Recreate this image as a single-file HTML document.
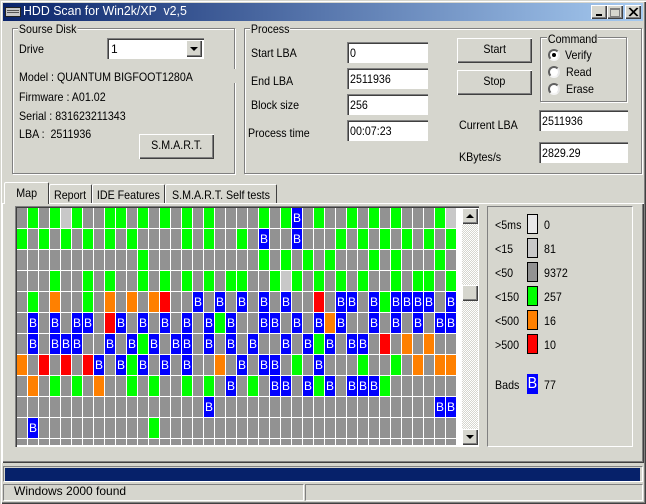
<!DOCTYPE html>
<html><head><meta charset="utf-8">
<style>
html,body{margin:0;padding:0;background:#d6d6ce}
#w{position:relative;width:646px;height:504px;overflow:hidden;background:#d6d6ce;font:12px/14px "Liberation Sans","NanumGothic",sans-serif;color:#000}
#w div,#w span.t{position:absolute;box-sizing:border-box}
.t{white-space:pre;position:absolute;transform:scaleX(.89);transform-origin:0 0}
.s{display:inline-block;white-space:pre;transform:scaleX(.89);transform-origin:0 0}
.c{display:inline-block;white-space:pre;transform:scaleX(.89);transform-origin:50% 50%}
.grp{border:1px solid #808080;box-shadow:1px 1px 0 #fff,inset 1px 1px 0 #fff}
.lbl{background:#d6d6ce;padding:0 1px}
.in{background:#fff;box-shadow:inset 1px 1px 0 #808080,inset 2px 2px 0 #404040,inset -1px -1px 0 #fff;padding:4px 0 0 3px;height:21px;font-size:12px;line-height:14px}
.btn{background:#d6d6ce;box-shadow:inset 1px 1px 0 #fff,inset -1px -1px 0 #404040,inset -2px -2px 0 #808080;text-align:center;line-height:22px}
.rad{width:12px;height:12px;border-radius:50%;background:#fff;border:2px solid;border-color:#606060 #e8e8e8 #f4f4f4 #606060;left:548px}
.tab{background:#d6d6ce;border:1px solid #fff;border-right:1px solid #404040;border-bottom:0;border-radius:2px 2px 0 0;padding-top:3px;text-align:center;white-space:nowrap}
#g{left:17px;top:208px;width:439px;height:237px;overflow:hidden;display:grid;grid-template-columns:repeat(40,11px);grid-template-rows:repeat(12,21px);background-color:#929292;background-image:repeating-linear-gradient(90deg,transparent 0 10px,#fff 10px 11px),repeating-linear-gradient(180deg,transparent 0 20px,#fff 20px 21px)}
#g i,#g b{display:block;width:10px;height:20px;font:normal 12px/20px "Liberation Sans Narrow","Liberation Sans",sans-serif;color:#fff;text-align:center}
.g{background:#0f0}.o{background:#ff8000}.r{background:#f00}.l{background:#c8c8c8}#g b{background:#00f}
.sw{left:527px;width:11px;height:20px;border:1px solid #000}
</style></head><body>
<div id="w">
<!-- window frame -->
<div style="left:0;top:0;width:646px;height:504px;box-shadow:inset 1px 1px 0 #d6d6ce,inset 2px 2px 0 #fff,inset -1px -1px 0 #404040,inset -2px -2px 0 #808080"></div>
<!-- title -->
<div style="left:3px;top:3px;width:640px;height:18px;background:linear-gradient(90deg,#0a246a,#a6caf0)"></div>
<div style="left:5px;top:7px;width:16px;height:10px;background:#c8c8c8;border:1px solid #222"></div>
<div style="left:7px;top:10px;width:12px;height:1px;background:#555"></div>
<div style="left:7px;top:12px;width:12px;height:1px;background:#555"></div>
<span class="t" style="left:23px;top:4px;color:#fff;font-size:13px;line-height:14px;transform:scaleX(.95)">HDD Scan for Win2k/XP  v2,5</span>
<div class="btn" style="left:591px;top:5px;width:16px;height:14px"></div>
<div style="left:596px;top:14px;width:6px;height:2px;background:#000"></div>
<div class="btn" style="left:607px;top:5px;width:16px;height:14px"></div>
<div style="left:610px;top:8px;width:10px;height:9px;border:1px solid #808080;border-top-width:2px"></div>
<div class="btn" style="left:625px;top:5px;width:16px;height:14px"></div>
<svg style="position:absolute;left:625px;top:5px" width="16" height="14"><path d="M4 3L12 11M5 3L13 11M12 3L4 11M13 3L5 11" stroke="#000" stroke-width="1"/></svg>

<!-- Sourse Disk -->
<div class="grp" style="left:12px;top:28px;width:223px;height:146px"></div>
<div style="left:233px;top:69px;width:5px;height:14px;background:#d6d6ce"></div>
<span class="t lbl" style="left:18px;top:22px">Sourse Disk</span>
<span class="t" style="left:19px;top:42px">Drive</span>
<div class="in" style="left:107px;top:38px;width:97px;height:21px;padding-left:4px">1</div>
<div class="btn" style="left:186px;top:40px;width:16px;height:17px"></div>
<svg style="position:absolute;left:186px;top:40px" width="16" height="17"><path d="M4 7H12L8 11Z" fill="#000"/></svg>
<span class="t" style="left:19px;top:70px">Model : QUANTUM BIGFOOT1280A</span>
<span class="t" style="left:19px;top:90px">Firmware : A01.02</span>
<span class="t" style="left:19px;top:109px">Serial : 831623211343</span>
<span class="t" style="left:19px;top:127px">LBA :  2511936</span>
<div class="btn" style="left:139px;top:134px;width:75px;height:25px"><span class="c">S.M.A.R.T.</span></div>

<!-- Process -->
<div class="grp" style="left:244px;top:28px;width:398px;height:146px"></div>
<span class="t lbl" style="left:250px;top:22px">Process</span>
<span class="t" style="left:251px;top:46px">Start LBA</span>
<span class="t" style="left:251px;top:74px">End LBA</span>
<span class="t" style="left:251px;top:98px">Block size</span>
<span class="t" style="left:248px;top:126px">Process time</span>
<div class="in" style="left:347px;top:42px;width:81px"><span class="s">0</span></div>
<div class="in" style="left:347px;top:68px;width:81px"><span class="s">2511936</span></div>
<div class="in" style="left:347px;top:94px;width:81px"><span class="s">256</span></div>
<div class="in" style="left:347px;top:120px;width:81px"><span class="s">00:07:23</span></div>
<div class="btn" style="left:457px;top:38px;width:75px;height:25px"><span class="c">Start</span></div>
<div class="btn" style="left:457px;top:70px;width:75px;height:25px"><span class="c">Stop</span></div>
<div class="grp" style="left:540px;top:37px;width:87px;height:65px"></div>
<span class="t lbl" style="left:547px;top:32px">Command</span>
<div class="rad" style="top:49px"></div>
<div style="left:552px;top:53px;width:4px;height:4px;border-radius:50%;background:#000"></div>
<div class="rad" style="top:66px"></div>
<div class="rad" style="top:83px"></div>
<span class="t" style="left:565px;top:48px">Verify</span>
<span class="t" style="left:566px;top:65px">Read</span>
<span class="t" style="left:566px;top:82px">Erase</span>
<span class="t" style="left:459px;top:118px">Current LBA</span>
<span class="t" style="left:459px;top:150px">KBytes/s</span>
<div class="in" style="left:539px;top:110px;width:89px"><span class="s">2511936</span></div>
<div class="in" style="left:539px;top:142px;width:89px"><span class="s">2829.29</span></div>

<!-- tab page -->
<div style="left:2px;top:203px;width:642px;height:260px;box-shadow:inset 1px 1px 0 #fff,inset -1px -1px 0 #404040,inset -2px -2px 0 #808080"></div>
<div class="tab" style="left:49px;top:184px;width:43px;height:19px"><span class="c">Report</span></div>
<div class="tab" style="left:92px;top:184px;width:73px;height:19px"><span class="c">IDE Features</span></div>
<div class="tab" style="left:165px;top:184px;width:112px;height:19px"><span class="c">S.M.A.R.T. Self tests</span></div>
<div class="tab" style="left:4px;top:182px;width:45px;height:22px"><span class="c">Map</span></div>

<!-- map -->
<div style="left:15px;top:206px;width:464px;height:241px;background:#fff;box-shadow:inset 1px 1px 0 #808080,inset 2px 2px 0 #404040"></div>
<div id="g">
<i class="g" style="grid-area:1/2"></i><i class="g" style="grid-area:1/4"></i><i class="l" style="grid-area:1/5"></i><i class="g" style="grid-area:1/6"></i><i class="g" style="grid-area:1/9"></i><i class="g" style="grid-area:1/10"></i><i class="g" style="grid-area:1/12"></i><i class="g" style="grid-area:1/14"></i><i class="g" style="grid-area:1/16"></i><i class="g" style="grid-area:1/18"></i><i class="g" style="grid-area:1/23"></i><i class="g" style="grid-area:1/25"></i><b style="grid-area:1/26">B</b><i class="g" style="grid-area:1/28"></i><i class="g" style="grid-area:1/31"></i><i class="g" style="grid-area:1/33"></i><i class="g" style="grid-area:1/35"></i><i class="g" style="grid-area:1/39"></i><i class="l" style="grid-area:1/40"></i>
<i class="g" style="grid-area:2/1"></i><i class="g" style="grid-area:2/3"></i><i class="g" style="grid-area:2/5"></i><i class="g" style="grid-area:2/7"></i><i class="g" style="grid-area:2/9"></i><i class="g" style="grid-area:2/11"></i><i class="g" style="grid-area:2/16"></i><i class="g" style="grid-area:2/18"></i><i class="g" style="grid-area:2/21"></i><b style="grid-area:2/23">B</b><b style="grid-area:2/26">B</b><i class="g" style="grid-area:2/30"></i><i class="g" style="grid-area:2/32"></i><i class="g" style="grid-area:2/34"></i><i class="g" style="grid-area:2/36"></i><i class="g" style="grid-area:2/38"></i><i class="g" style="grid-area:2/40"></i>
<i class="g" style="grid-area:3/12"></i><i class="g" style="grid-area:3/23"></i><i class="g" style="grid-area:3/25"></i><i class="g" style="grid-area:3/27"></i><i class="g" style="grid-area:3/29"></i><i class="g" style="grid-area:3/33"></i><i class="g" style="grid-area:3/35"></i><i class="g" style="grid-area:3/39"></i>
<i class="g" style="grid-area:4/4"></i><i class="g" style="grid-area:4/7"></i><i class="g" style="grid-area:4/9"></i><i class="g" style="grid-area:4/12"></i><i class="g" style="grid-area:4/14"></i><i class="g" style="grid-area:4/16"></i><i class="g" style="grid-area:4/18"></i><i class="g" style="grid-area:4/20"></i><i class="g" style="grid-area:4/21"></i><i class="g" style="grid-area:4/24"></i><i class="l" style="grid-area:4/25"></i><i class="g" style="grid-area:4/26"></i><i class="g" style="grid-area:4/28"></i><i class="g" style="grid-area:4/30"></i><i class="g" style="grid-area:4/32"></i><i class="g" style="grid-area:4/35"></i><i class="g" style="grid-area:4/37"></i><i class="g" style="grid-area:4/38"></i><i class="g" style="grid-area:4/40"></i>
<i class="g" style="grid-area:5/2"></i><i class="o" style="grid-area:5/4"></i><i class="g" style="grid-area:5/7"></i><i class="o" style="grid-area:5/9"></i><i class="o" style="grid-area:5/11"></i><i class="o" style="grid-area:5/13"></i><i class="r" style="grid-area:5/14"></i><b style="grid-area:5/17">B</b><b style="grid-area:5/19">B</b><b style="grid-area:5/21">B</b><b style="grid-area:5/23">B</b><b style="grid-area:5/25">B</b><i class="r" style="grid-area:5/28"></i><b style="grid-area:5/30">B</b><b style="grid-area:5/31">B</b><b style="grid-area:5/33">B</b><i class="g" style="grid-area:5/34"></i><b style="grid-area:5/35">B</b><b style="grid-area:5/36">B</b><b style="grid-area:5/37">B</b><b style="grid-area:5/38">B</b><b style="grid-area:5/40">B</b>
<b style="grid-area:6/2">B</b><b style="grid-area:6/4">B</b><b style="grid-area:6/6">B</b><b style="grid-area:6/7">B</b><i class="r" style="grid-area:6/9"></i><b style="grid-area:6/10">B</b><b style="grid-area:6/12">B</b><b style="grid-area:6/14">B</b><b style="grid-area:6/16">B</b><b style="grid-area:6/18">B</b><i class="g" style="grid-area:6/19"></i><b style="grid-area:6/20">B</b><b style="grid-area:6/23">B</b><b style="grid-area:6/24">B</b><b style="grid-area:6/26">B</b><b style="grid-area:6/28">B</b><i class="o" style="grid-area:6/29"></i><b style="grid-area:6/30">B</b><b style="grid-area:6/33">B</b><b style="grid-area:6/35">B</b><b style="grid-area:6/37">B</b><b style="grid-area:6/39">B</b><b style="grid-area:6/40">B</b>
<b style="grid-area:7/2">B</b><b style="grid-area:7/4">B</b><b style="grid-area:7/5">B</b><b style="grid-area:7/6">B</b><b style="grid-area:7/9">B</b><b style="grid-area:7/11">B</b><i class="g" style="grid-area:7/12"></i><b style="grid-area:7/13">B</b><b style="grid-area:7/15">B</b><b style="grid-area:7/16">B</b><b style="grid-area:7/18">B</b><b style="grid-area:7/20">B</b><b style="grid-area:7/22">B</b><b style="grid-area:7/25">B</b><b style="grid-area:7/27">B</b><i class="g" style="grid-area:7/28"></i><b style="grid-area:7/29">B</b><b style="grid-area:7/31">B</b><b style="grid-area:7/32">B</b><i class="r" style="grid-area:7/34"></i><i class="o" style="grid-area:7/36"></i><i class="o" style="grid-area:7/38"></i>
<i class="o" style="grid-area:8/1"></i><i class="r" style="grid-area:8/3"></i><i class="r" style="grid-area:8/5"></i><i class="r" style="grid-area:8/7"></i><b style="grid-area:8/8">B</b><b style="grid-area:8/10">B</b><i class="g" style="grid-area:8/11"></i><b style="grid-area:8/12">B</b><b style="grid-area:8/14">B</b><b style="grid-area:8/16">B</b><i class="o" style="grid-area:8/19"></i><b style="grid-area:8/21">B</b><b style="grid-area:8/23">B</b><b style="grid-area:8/24">B</b><i class="g" style="grid-area:8/26"></i><b style="grid-area:8/28">B</b><i class="g" style="grid-area:8/32"></i><i class="g" style="grid-area:8/35"></i><i class="o" style="grid-area:8/37"></i><i class="o" style="grid-area:8/39"></i><i class="o" style="grid-area:8/40"></i>
<i class="o" style="grid-area:9/2"></i><i class="g" style="grid-area:9/4"></i><i class="g" style="grid-area:9/6"></i><i class="o" style="grid-area:9/8"></i><i class="g" style="grid-area:9/11"></i><i class="g" style="grid-area:9/13"></i><i class="g" style="grid-area:9/16"></i><i class="g" style="grid-area:9/18"></i><b style="grid-area:9/20">B</b><i class="g" style="grid-area:9/22"></i><b style="grid-area:9/24">B</b><b style="grid-area:9/25">B</b><b style="grid-area:9/27">B</b><i class="g" style="grid-area:9/28"></i><b style="grid-area:9/29">B</b><b style="grid-area:9/31">B</b><b style="grid-area:9/32">B</b><b style="grid-area:9/33">B</b><i class="g" style="grid-area:9/34"></i>
<b style="grid-area:10/18">B</b><b style="grid-area:10/39">B</b><b style="grid-area:10/40">B</b>
<b style="grid-area:11/2">B</b><i class="g" style="grid-area:11/13"></i>
</div>
<!-- scrollbar -->
<div style="left:462px;top:208px;width:16px;height:237px;background-color:#eeeeea;background-image:repeating-conic-gradient(#d6d6ce 0 25%,#fff 0 50%);background-size:2px 2px"></div>
<div class="btn" style="left:462px;top:208px;width:16px;height:16px"></div>
<svg style="position:absolute;left:462px;top:208px" width="16" height="16"><path d="M4 10H12L8 6Z" fill="#000"/></svg>
<div class="btn" style="left:462px;top:285px;width:16px;height:16px"></div>
<div class="btn" style="left:462px;top:429px;width:16px;height:16px"></div>
<svg style="position:absolute;left:462px;top:429px" width="16" height="16"><path d="M4 6H12L8 10Z" fill="#000"/></svg>

<!-- legend -->
<div style="left:487px;top:206px;width:146px;height:241px;border:1px solid;border-color:#808080 #fff #fff #808080"></div>
<span class="t" style="left:495px;top:218px">&lt;5ms</span>
<span class="t" style="left:495px;top:242px">&lt;15</span>
<span class="t" style="left:495px;top:266px">&lt;50</span>
<span class="t" style="left:495px;top:290px">&lt;150</span>
<span class="t" style="left:495px;top:314px">&lt;500</span>
<span class="t" style="left:495px;top:338px">&gt;500</span>
<span class="t" style="left:495px;top:378px">Bads</span>
<div class="sw" style="top:214px;background:#e8e8e8"></div>
<div class="sw" style="top:238px;background:#c8c8c8"></div>
<div class="sw" style="top:262px;background:#929292"></div>
<div class="sw" style="top:286px;background:#0f0"></div>
<div class="sw" style="top:310px;background:#ff8000"></div>
<div class="sw" style="top:334px;background:#f00"></div>
<div style="left:527px;top:374px;width:11px;height:20px;background:#00f;color:#fff;font-size:16px;line-height:20px;text-align:center;overflow:hidden"><span class="c">B</span></div>
<span class="t" style="left:544px;top:218px">0</span>
<span class="t" style="left:544px;top:242px">81</span>
<span class="t" style="left:544px;top:266px">9372</span>
<span class="t" style="left:544px;top:290px">257</span>
<span class="t" style="left:544px;top:314px">16</span>
<span class="t" style="left:544px;top:338px">10</span>
<span class="t" style="left:544px;top:378px">77</span>

<!-- progress -->
<div style="left:3px;top:466px;width:640px;height:16px;border:1px solid;border-color:#808080 #fff #fff #808080"></div>
<div style="left:5px;top:468px;width:635px;height:13px;background:#06216a"></div>
<!-- status -->
<div style="left:3px;top:484px;width:301px;height:17px;border:1px solid;border-color:#808080 #fff #fff #808080"></div>
<div style="left:305px;top:484px;width:338px;height:17px;border:1px solid;border-color:#808080 #fff #fff #808080"></div>
<span class="t" style="left:14px;top:484px;transform:none">Windows 2000 found</span>
</div>
</body></html>
